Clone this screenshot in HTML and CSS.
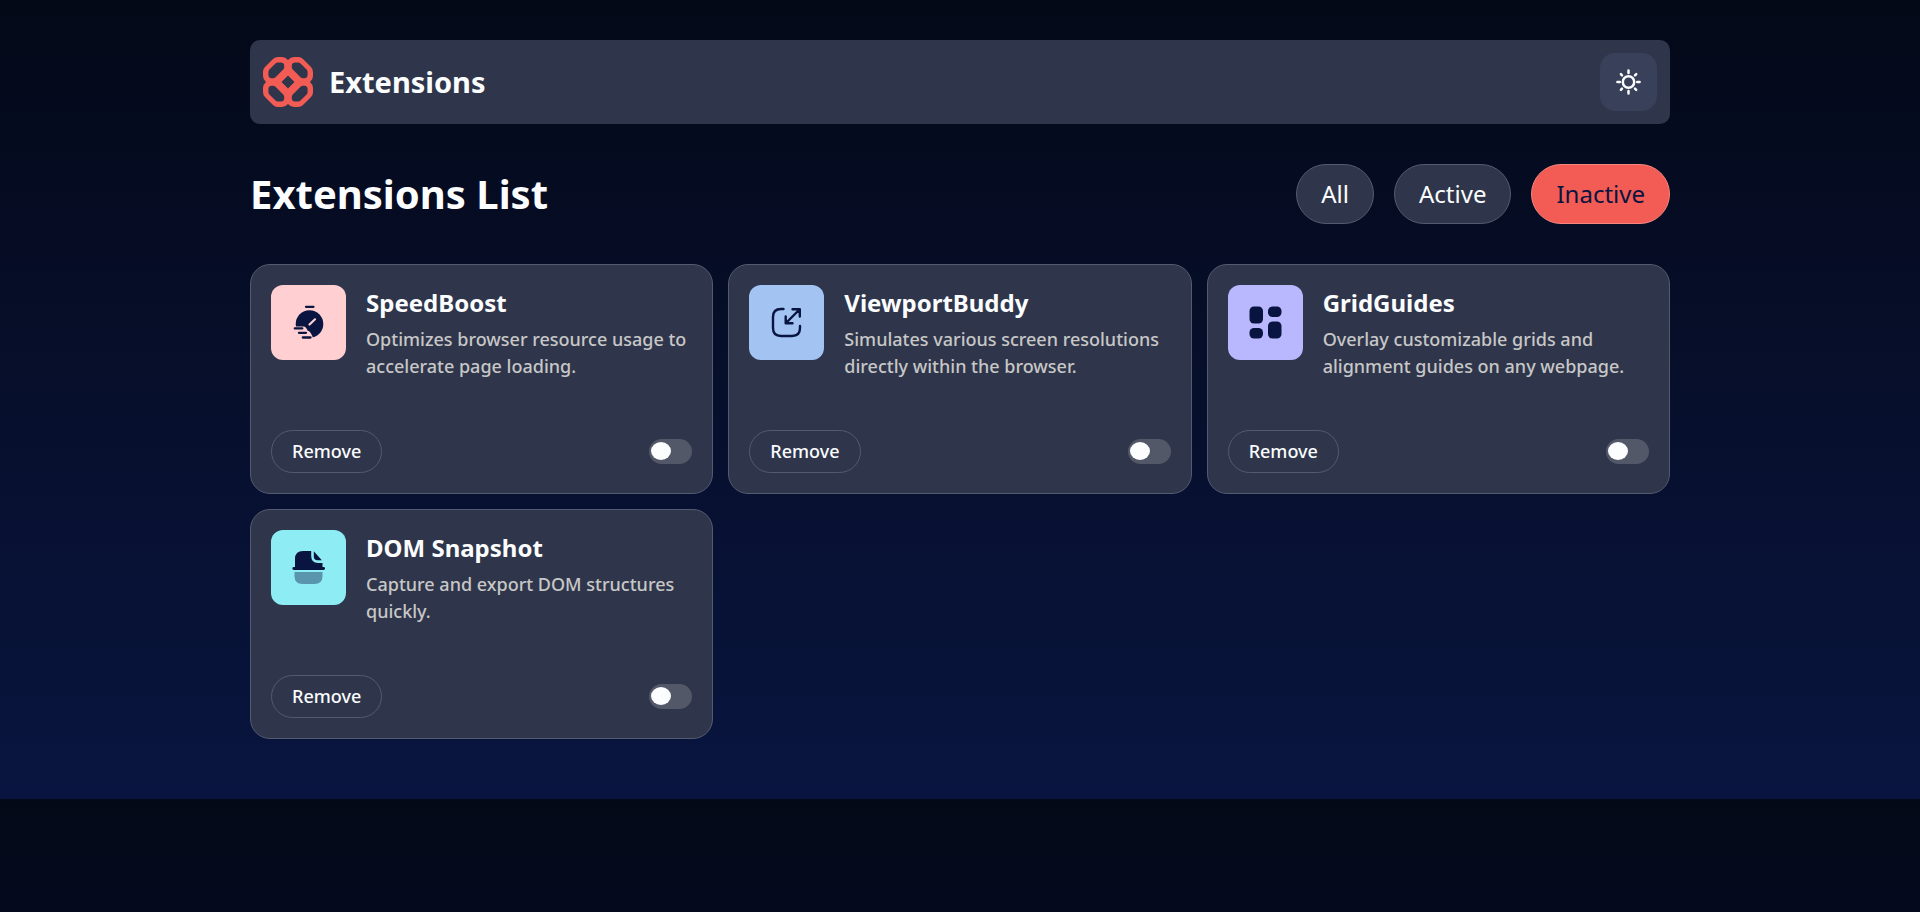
FILE: index.html
```html
<!DOCTYPE html>
<html lang="en">
<head>
<meta charset="utf-8">
<meta name="viewport" content="width=device-width, initial-scale=1">
<title>Extensions</title>
<link rel="stylesheet" href="styles.css">
</head>
<body>
<div class="page">
  <header class="topbar">
    <a class="brand" href="#">
      <svg class="brand-mark" viewBox="0 0 50 50" aria-hidden="true">
        <defs>
          <path id="lobe" fill-rule="evenodd" d="M0 14.500Q0 12 2 10L10 2Q12 0 15 0H19Q22.500 0 25 3V18L18 25H3Q0 22.500 0 19ZM5.400 15V17.500Q5.400 21.200 8.500 21.200H10Q11.500 21.200 12.500 20.200L20.200 12.500Q21.200 11.500 21.200 10V8.500Q21.200 5.400 17.500 5.400H15Q13.500 5.400 12.500 6.400L6.400 12.500Q5.400 13.500 5.400 15Z"/>
        </defs>
        <g fill="#f25c54">
          <use href="#lobe"/>
          <use href="#lobe" transform="rotate(90 25 25)"/>
          <use href="#lobe" transform="rotate(180 25 25)"/>
          <use href="#lobe" transform="rotate(270 25 25)"/>
        </g>
        <path d="M25 15.500L34.500 25L25 34.500L15.500 25Z" fill="none" stroke="#f25c54" stroke-width="4"/>
      </svg>
      <span class="brand-name">Extensions</span>
    </a>
    <button class="theme" type="button" aria-label="Switch theme">
      <svg viewBox="0 0 26 26" fill="none" stroke="#fbfdfe" stroke-width="2.500" stroke-linecap="round" aria-hidden="true">
        <circle cx="12.500" cy="13" r="5.700"/>
        <path d="M12.500 1.500V4M12.500 22V24.500M1.400 13H3.800M21.200 13H23.600M4.900 5.200L6 6.400M19 19.600L20.200 20.800M4.900 20.800L6 19.600M19 6.400L20.200 5.200"/>
      </svg>
    </button>
  </header>

  <main>
    <div class="heading">
      <h1>Extensions List</h1>
      <div class="filters">
        <button class="filter" type="button">All</button>
        <button class="filter" type="button">Active</button>
        <button class="filter filter-on" type="button" aria-pressed="true">Inactive</button>
      </div>
    </div>

    <div class="grid">
      <article class="card">
        <div class="info">
          <svg class="tile tile-pink" viewBox="0 0 75 75" aria-hidden="true">
            <circle cx="38.500" cy="39" r="13.800" fill="#091540"/>
            <path d="M22 41.500H32.500Q35 41.500 36.500 45.500Q40.500 47 42 53.500H22Z" fill="#ffcfd2"/>
            <path d="M35 21.800H42.500M23.800 43.400H31.300M28 47.800H35M31.800 52.500H39.500" stroke="#091540" stroke-width="2.300" stroke-linecap="round"/>
            <path d="M38.500 39.500L44 34.300" stroke="#ffcfd2" stroke-width="2.200" stroke-linecap="round"/>
          </svg>
          <div class="copy">
            <h2>SpeedBoost</h2>
            <p>Optimizes browser resource usage to accelerate page loading.</p>
          </div>
        </div>
        <div class="actions">
          <button class="remove" type="button">Remove</button>
          <input class="toggle" type="checkbox" role="switch" aria-label="Enable SpeedBoost">
        </div>
      </article>

      <article class="card">
        <div class="info">
          <svg class="tile tile-blue" viewBox="0 0 75 75" aria-hidden="true">
            <path d="M34.500 24H32Q24 24 24 32V43Q24 51 32 51H43Q51 51 51 43V41M50.500 24.500L37 38M43.500 24.200H50.800V31.500M36.700 31.500V38.300H43.500" fill="none" stroke="#091540" stroke-width="2.400" stroke-linecap="round" stroke-linejoin="round"/>
          </svg>
          <div class="copy">
            <h2>ViewportBuddy</h2>
            <p>Simulates various screen resolutions directly within the browser.</p>
          </div>
        </div>
        <div class="actions">
          <button class="remove" type="button">Remove</button>
          <input class="toggle" type="checkbox" role="switch" aria-label="Enable ViewportBuddy">
        </div>
      </article>

      <article class="card">
        <div class="info">
          <svg class="tile tile-violet" viewBox="0 0 75 75" aria-hidden="true">
            <g fill="#091540">
              <rect x="21.500" y="21.500" width="13.500" height="17" rx="4.500"/>
              <rect x="40" y="21.500" width="13.500" height="10.500" rx="4.500"/>
              <rect x="21.500" y="43" width="13.500" height="10.500" rx="4.500"/>
              <rect x="40" y="36.500" width="13.500" height="17" rx="4.500"/>
            </g>
          </svg>
          <div class="copy">
            <h2>GridGuides</h2>
            <p>Overlay customizable grids and alignment guides on any webpage.</p>
          </div>
        </div>
        <div class="actions">
          <button class="remove" type="button">Remove</button>
          <input class="toggle" type="checkbox" role="switch" aria-label="Enable GridGuides">
        </div>
      </article>

      <article class="card">
        <div class="info">
          <svg class="tile tile-cyan" viewBox="0 0 75 75" aria-hidden="true">
            <g fill="#091540">
              <path d="M24 37V29Q24 21 32 21H40.200V26Q40.200 33 47 33H51.500V37H52.600A1.400 1.400 0 0 1 52.600 39.900H22.800A1.400 1.400 0 0 1 22.800 37Z"/>
              <path d="M42.800 21.300L50.800 30.200H46.500Q42.800 30.200 42.800 26.500Z"/>
              <path d="M23.500 42H51.500V46Q51.500 54 43.500 54H31.500Q23.500 54 23.500 46Z" opacity=".4"/>
            </g>
          </svg>
          <div class="copy">
            <h2>DOM Snapshot</h2>
            <p>Capture and export DOM structures quickly.</p>
          </div>
        </div>
        <div class="actions">
          <button class="remove" type="button">Remove</button>
          <input class="toggle" type="checkbox" role="switch" aria-label="Enable DOM Snapshot">
        </div>
      </article>
    </div>
  </main>
</div>
</body>
</html>
```

FILE: styles.css
```css
* {
  box-sizing: border-box;
}

body {
  margin: 0;
  background: linear-gradient(180deg, #040918 0%, #091540 100%);
  color: #fbfdfe;
  font-family: "Noto Sans", sans-serif;
}

.page {
  max-width: 1460px;
  margin: 0 auto;
  padding: 40px 20px 60px;
}

button {
  font-family: inherit;
  color: inherit;
  cursor: pointer;
}

h1,
h2,
p {
  margin: 0;
}

.topbar {
  display: flex;
  align-items: center;
  justify-content: space-between;
  padding: 13px;
  border-radius: 10px;
  background: #2f364b;
}

.brand {
  display: flex;
  align-items: center;
  gap: 16px;
  color: inherit;
  text-decoration: none;
}

.brand-mark {
  width: 50px;
  height: 50px;
}

.brand-name {
  font-size: 29px;
  font-weight: 700;
  line-height: 40px;
}

.theme {
  display: grid;
  place-items: center;
  width: 57px;
  height: 58px;
  padding: 0;
  border: 0;
  border-radius: 15px;
  background: #394059;
}

.theme svg {
  width: 26px;
  height: 26px;
}

.heading {
  display: flex;
  flex-wrap: wrap;
  align-items: center;
  justify-content: space-between;
  gap: 20px;
  margin: 40px 0;
}

h1 {
  font-size: 40px;
  font-weight: 700;
  line-height: 60px;
}

.filters {
  display: flex;
  gap: 20px;
}

.filter {
  height: 60px;
  padding: 0 24px 2px;
  border: 1px solid #535b6e;
  border-radius: 30px;
  background: #2f364b;
  font-size: 24px;
}

.filter-on {
  border-color: #f4857f;
  background: #f25c54;
  color: #091540;
}

.grid {
  display: grid;
  grid-template-columns: repeat(auto-fill, minmax(360px, 1fr));
  gap: 15px;
}

.card {
  display: flex;
  flex-direction: column;
  justify-content: space-between;
  min-height: 230px;
  padding: 20px;
  border: 1px solid #535b6e;
  border-radius: 20px;
  background: #2f364b;
}

.info {
  display: flex;
  align-items: flex-start;
  gap: 20px;
}

.tile {
  flex: none;
  width: 75px;
  height: 75px;
  border-radius: 12px;
}

.tile-pink {
  background: #ffcfd2;
}

.tile-blue {
  background: #a3c4f3;
}

.tile-violet {
  background: #b9b8ff;
}

.tile-cyan {
  background: #8eecf5;
}

h2 {
  font-size: 24px;
  font-weight: 700;
  line-height: 36px;
}

.copy p {
  padding-top: 5px;
  color: #c7c7c7;
  font-size: 18px;
  font-weight: 500;
  line-height: 27px;
}

.actions {
  display: flex;
  align-items: center;
  justify-content: space-between;
}

.remove {
  height: 43px;
  padding: 0 20px 2px;
  border: 1px solid #535b6e;
  border-radius: 22px;
  background: transparent;
  font-size: 18px;
  font-weight: 500;
}

.toggle {
  display: flex;
  align-items: center;
  width: 43px;
  height: 25px;
  margin: 0;
  padding: 0 2px 1px;
  appearance: none;
  border-radius: 13px;
  background: #535868;
  cursor: pointer;
}

.toggle::before {
  content: "";
  width: 20px;
  height: 18px;
  border-radius: 50%;
  background: #fbfdfe;
}

.toggle:checked {
  justify-content: flex-end;
  background: #f25c54;
}
```
